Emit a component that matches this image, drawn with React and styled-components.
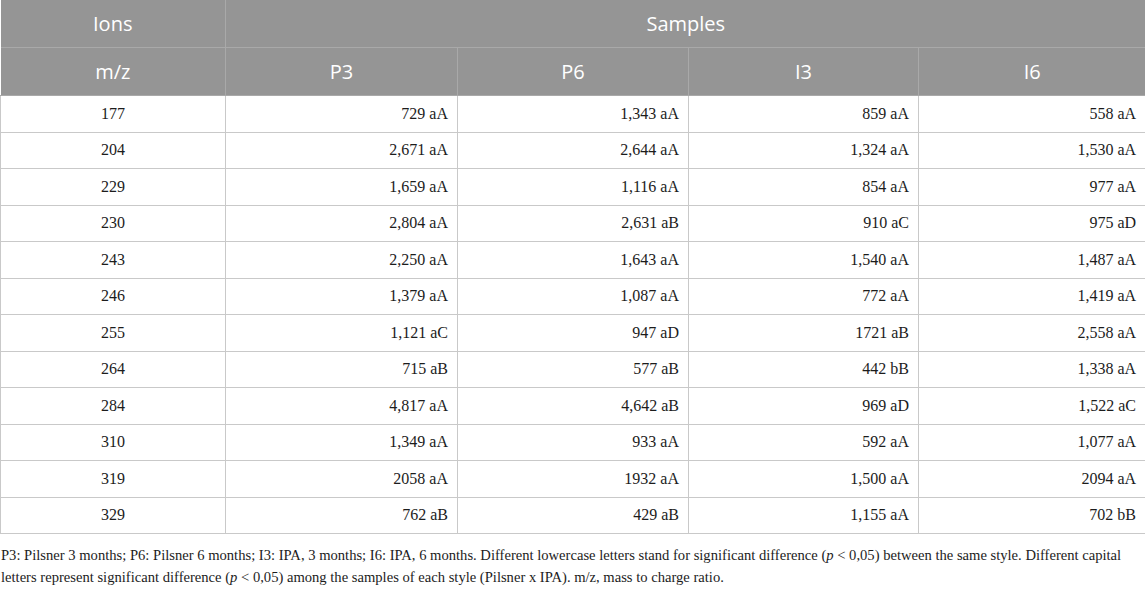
import React from "react";
import styled, { createGlobalStyle } from "styled-components";

const GlobalStyle = createGlobalStyle`
  html, body {
    margin: 0;
    padding: 0;
    background: #ffffff;
  }
`;

const Page = styled.div`
  width: 1145px;
`;

const Table = styled.table`
  width: 1145px;
  border-collapse: collapse;
  table-layout: fixed;
`;

const HeadCell = styled.th`
  height: 47px;
  padding: 0;
  background: #959595;
  color: #ffffff;
  font-family: "Open Sans", "Noto Sans", sans-serif;
  font-size: 20px;
  font-weight: 400;
  text-align: center;
  border: 1px solid #a9a9a9;
  border-top: none;
  &:first-child {
    border-left: none;
  }
  &:last-child {
    border-right: none;
  }
`;

const Cell = styled.td`
  height: 35.5px;
  padding: 0 9px;
  font-family: "Liberation Serif", "Times New Roman", serif;
  font-size: 16px;
  color: #1c1c1c;
  text-align: ${(p) => (p.$center ? "center" : "right")};
  border: 1px solid #c9c9c9;
`;

const Note = styled.p`
  margin: 10px 0 0;
  padding-left: 1px;
  font-family: "Liberation Serif", "Times New Roman", serif;
  font-size: 14.6px;
  line-height: 22px;
  color: #1c1c1c;
  white-space: nowrap;
`;

const cols = [225, 232, 231, 230, 227];

const rows = [
  ["177", "729 aA", "1,343 aA", "859 aA", "558 aA"],
  ["204", "2,671 aA", "2,644 aA", "1,324 aA", "1,530 aA"],
  ["229", "1,659 aA", "1,116 aA", "854 aA", "977 aA"],
  ["230", "2,804 aA", "2,631 aB", "910 aC", "975 aD"],
  ["243", "2,250 aA", "1,643 aA", "1,540 aA", "1,487 aA"],
  ["246", "1,379 aA", "1,087 aA", "772 aA", "1,419 aA"],
  ["255", "1,121 aC", "947 aD", "1721 aB", "2,558 aA"],
  ["264", "715 aB", "577 aB", "442 bB", "1,338 aA"],
  ["284", "4,817 aA", "4,642 aB", "969 aD", "1,522 aC"],
  ["310", "1,349 aA", "933 aA", "592 aA", "1,077 aA"],
  ["319", "2058 aA", "1932 aA", "1,500 aA", "2094 aA"],
  ["329", "762 aB", "429 aB", "1,155 aA", "702 bB"],
];

export default function App() {
  return (
    <Page>
      <GlobalStyle />
      <Table>
        <colgroup>
          {cols.map((w, i) => (
            <col key={i} style={{ width: w }} />
          ))}
        </colgroup>
        <thead>
          <tr>
            <HeadCell>Ions</HeadCell>
            <HeadCell colSpan={4}>Samples</HeadCell>
          </tr>
          <tr>
            <HeadCell>m/z</HeadCell>
            <HeadCell>P3</HeadCell>
            <HeadCell>P6</HeadCell>
            <HeadCell>I3</HeadCell>
            <HeadCell>I6</HeadCell>
          </tr>
        </thead>
        <tbody>
          {rows.map((r) => (
            <tr key={r[0]}>
              {r.map((v, i) => (
                <Cell key={i} $center={i === 0}>
                  {v}
                </Cell>
              ))}
            </tr>
          ))}
        </tbody>
      </Table>
      <Note>
        P3: Pilsner 3 months; P6: Pilsner 6 months; I3: IPA, 3 months; I6: IPA, 6 months. Different lowercase
        letters stand for significant difference (<i>p</i> &lt; 0,05) between the same style. Different capital
        <br />
        letters represent significant difference (<i>p</i> &lt; 0,05) among the samples of each style (Pilsner x
        IPA). m/z, mass to charge ratio.
      </Note>
    </Page>
  );
}
